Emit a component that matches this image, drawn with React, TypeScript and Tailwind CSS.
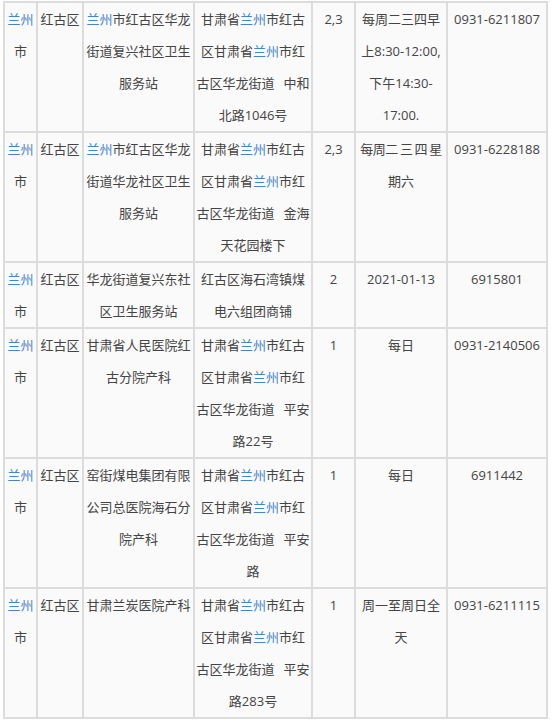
import React from "react";

type Row = {
  c1: string[];
  c2: string[];
  c3: string[];
  c4: React.ReactNode[];
  c5: string;
  c6: React.ReactNode[];
  c7: string;
};

function hl(s: string): React.ReactNode {
  const parts = s.split("兰州");
  const out: React.ReactNode[] = [];
  parts.forEach((p, i) => {
    if (i > 0)
      out.push(
        <span key={"k" + i} className="text-[#4584c8]">
          兰州
        </span>
      );
    if (p) out.push(<React.Fragment key={"p" + i}>{p}</React.Fragment>);
  });
  return out;
}

function Lines({ lines }: { lines: React.ReactNode[] }) {
  return (
    <>
      {lines.map((l, i) => (
        <div key={i} className="h-[32px] whitespace-nowrap">
          {typeof l === "string" ? hl(l) : l}
        </div>
      ))}
    </>
  );
}

const gap = <span className="inline-block w-[9px]" />;

const rows: Row[] = [
  {
    c1: ["兰州", "市"],
    c2: ["红古区"],
    c3: ["兰州市红古区华龙", "街道复兴社区卫生", "服务站"],
    c4: [
      "甘肃省兰州市红古",
      "区甘肃省兰州市红",
      <span key="a">
        古区华龙街道{gap}中和
      </span>,
      "北路1046号",
    ],
    c5: "2,3",
    c6: ["每周二三四早", "上8:30-12:00,", "下午14:30-", "17:00."],
    c7: "0931-6211807",
  },
  {
    c1: ["兰州", "市"],
    c2: ["红古区"],
    c3: ["兰州市红古区华龙", "街道华龙社区卫生", "服务站"],
    c4: [
      "甘肃省兰州市红古",
      "区甘肃省兰州市红",
      <span key="a">
        古区华龙街道{gap}金海
      </span>,
      "天花园楼下",
    ],
    c5: "2,3",
    c6: [
      <span key="b" className="tracking-[-0.4px]">
        每周二<span className="inline-block w-[2px]" />三
        <span className="inline-block w-[2px]" />四
        <span className="inline-block w-[2px]" />星
      </span>,
      "期六",
    ],
    c7: "0931-6228188",
  },
  {
    c1: ["兰州", "市"],
    c2: ["红古区"],
    c3: ["华龙街道复兴东社", "区卫生服务站"],
    c4: ["红古区海石湾镇煤", "电六组团商铺"],
    c5: "2",
    c6: ["2021-01-13"],
    c7: "6915801",
  },
  {
    c1: ["兰州", "市"],
    c2: ["红古区"],
    c3: ["甘肃省人民医院红", "古分院产科"],
    c4: [
      "甘肃省兰州市红古",
      "区甘肃省兰州市红",
      <span key="a">
        古区华龙街道{gap}平安
      </span>,
      "路22号",
    ],
    c5: "1",
    c6: ["每日"],
    c7: "0931-2140506",
  },
  {
    c1: ["兰州", "市"],
    c2: ["红古区"],
    c3: ["窑街煤电集团有限", "公司总医院海石分", "院产科"],
    c4: [
      "甘肃省兰州市红古",
      "区甘肃省兰州市红",
      <span key="a">
        古区华龙街道{gap}平安
      </span>,
      "路",
    ],
    c5: "1",
    c6: ["每日"],
    c7: "6911442",
  },
  {
    c1: ["兰州", "市"],
    c2: ["红古区"],
    c3: ["甘肃兰炭医院产科"],
    c4: [
      "甘肃省兰州市红古",
      "区甘肃省兰州市红",
      <span key="a">
        古区华龙街道{gap}平安
      </span>,
      "路283号",
    ],
    c5: "1",
    c6: ["周一至周日全", "天"],
    c7: "0931-6211115",
  },
];

const cell =
  "border-r-2 border-b-2 border-[#dcdcdc] bg-[#fafafa] align-top text-center px-0 py-0 overflow-visible";

export default function App() {
  return (
    <div
      className="min-h-[722px] bg-white pt-[1px] pl-[3px] text-[13px] leading-[32px] text-[#444]"
      style={{ fontFamily: '"Open Sans", "Noto Sans CJK SC", sans-serif' }}
    >
      <table className="table-fixed border-separate border-spacing-0 border-t-2 border-l-2 border-[#dcdcdc] w-[545px]">
        <colgroup>
          <col className="w-[33px]" />
          <col className="w-[46px]" />
          <col className="w-[111px]" />
          <col className="w-[118px]" />
          <col className="w-[43px]" />
          <col className="w-[92px]" />
          <col className="w-[100px]" />
        </colgroup>
        <tbody>
          {rows.map((r, i) => (
            <tr key={i}>
              <td className={cell}>
                <Lines lines={r.c1} />
              </td>
              <td className={cell}>
                <Lines lines={r.c2} />
              </td>
              <td className={cell}>
                <Lines lines={r.c3} />
              </td>
              <td className={cell}>
                <Lines lines={r.c4} />
              </td>
              <td className={cell}>
                <Lines lines={[r.c5]} />
              </td>
              <td className={cell}>
                <Lines lines={r.c6} />
              </td>
              <td className={cell}>
                <Lines lines={[r.c7]} />
              </td>
            </tr>
          ))}
        </tbody>
      </table>
    </div>
  );
}
